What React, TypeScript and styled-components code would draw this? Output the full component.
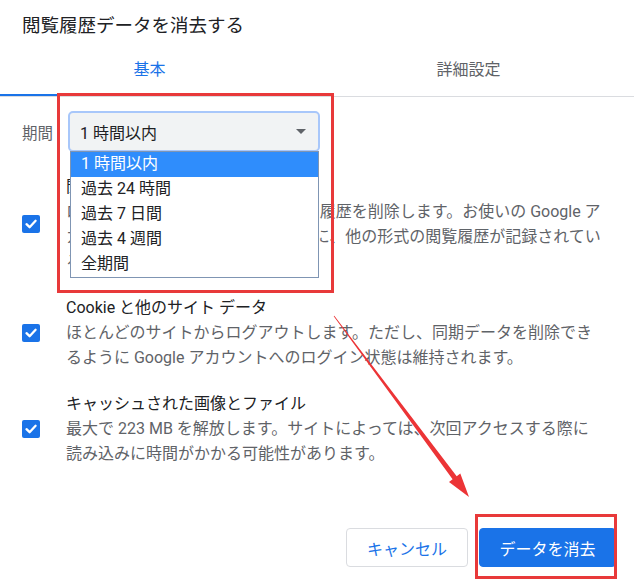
import React from "react";
import styled, { createGlobalStyle } from "styled-components";

const GlobalStyle = createGlobalStyle`
    html, body {
        margin: 0;
        padding: 0;
        background: #ffffff;
    }
    body {
        font-family: Roboto, "Noto Sans CJK JP", "Noto Sans", sans-serif;
        color: #202124;
    }
`

const Dialog = styled.div`
    position: relative;
    width: 634px;
    height: 586px;
    overflow: hidden;
    background: #ffffff;
`

const Title = styled.div`
    height: 48px;
    box-sizing: border-box;
    padding: 15px 22px 0;
    font-size: 18.5px;
    line-height: 22px;
    color: #202124;
`

const TabStrip = styled.div`
    display: flex;
    margin-left: -10px;
    width: 644px;
    border-bottom: 1px solid #dadce0;
`

const Tab = styled.div<{ $active?: boolean }>`
    width: 319px;
    height: 48px;
    box-sizing: border-box;
    padding-top: 12px;
    text-align: center;
    font-size: 16px;
    line-height: 20px;
    color: ${p => (p.$active ? "#1a73e8" : "#5f6368")};
    border-bottom: 2px solid ${p => (p.$active ? "#1a73e8" : "transparent")};
`

const PeriodRow = styled.div`
    display: flex;
    align-items: center;
    margin-top: 14px;
    padding-left: 22px;
    gap: 15px;
`

const Label = styled.span`
    font-size: 15.5px;
    color: #5f6368;
`

const SelectWrap = styled.div`
    position: relative;
    width: 252px;
`

const SelectBox = styled.div`
    height: 41px;
    box-sizing: border-box;
    display: flex;
    align-items: center;
    justify-content: space-between;
    padding: 0 12px 0 10px;
    background: #f1f3f4;
    border: 2px solid #a8c7fa;
    border-radius: 5px;
    font-size: 16px;
    color: #202124;
`

const Caret = styled.span`
    width: 0;
    height: 0;
    border-left: 5px solid transparent;
    border-right: 5px solid transparent;
    border-top: 5px solid #5f6368;
`

const OptionList = styled.div`
    position: absolute;
    top: 40px;
    left: 2px;
    width: 249px;
    box-sizing: border-box;
    background: #ffffff;
    border: 1px solid #7f95b3;
    z-index: 2;
`

const Option = styled.div<{ $selected?: boolean }>`
    height: 25px;
    line-height: 24px;
    padding-left: 10px;
    font-size: 16px;
    color: ${p => (p.$selected ? "#ffffff" : "#202124")};
    background: ${p => (p.$selected ? "#2f8dfc" : "transparent")};
`

const Sections = styled.div`
    display: flex;
    flex-direction: column;
    gap: 21px;
    padding-top: 22px;
`

const Section = styled.div`
    display: flex;
    align-items: center;
    padding-left: 22px;
    gap: 26px;
`

const Check = styled.span`
    flex: none;
    width: 18px;
    height: 18px;
    border-radius: 2px;
    background: #1a73e8;
    display: flex;
    align-items: center;
    justify-content: center;
`

const SectionText = styled.div`
    font-size: 16px;
    line-height: 25px;
    white-space: nowrap;
`

const SectionTitle = styled.div`
    color: #202124;
`

const SectionBody = styled.div`
    color: #5f6368;
`

const Footer = styled.div`
    display: flex;
    justify-content: flex-end;
    gap: 11px;
    margin-top: 62px;
    padding-right: 18px;
`

const Button = styled.button<{ $primary?: boolean }>`
    height: 39px;
    width: ${p => (p.$primary ? "137px" : "122px")};
    box-sizing: border-box;
    border-radius: 4px;
    border: 1px solid ${p => (p.$primary ? "#1a73e8" : "#dadce0")};
    background: ${p => (p.$primary ? "#1a73e8" : "#ffffff")};
    color: ${p => (p.$primary ? "#ffffff" : "#1a73e8")};
    font-family: Roboto, "Noto Sans CJK JP", sans-serif;
    font-size: 16px;
    padding: 0;
`

const RedFrame = styled.div<{ $x: number; $y: number; $w: number; $h: number }>`
    position: absolute;
    left: ${p => p.$x}px;
    top: ${p => p.$y}px;
    width: ${p => p.$w}px;
    height: ${p => p.$h}px;
    box-sizing: border-box;
    border: 3px solid #e8393a;
    pointer-events: none;
    z-index: 3;
`

const ArrowLayer = styled.svg`
    position: absolute;
    left: 0;
    top: 0;
    pointer-events: none;
    z-index: 3;
`

const CheckIcon = () => (
    <svg width="14" height="14" viewBox="0 0 14 14">
        <path d="M2.5 7.2 L5.6 10.2 L11.6 3.8" fill="none" stroke="#fff" strokeWidth="2.3" strokeLinecap="round" strokeLinejoin="round" />
    </svg>
)

const periods = ["1 時間以内", "過去 24 時間", "過去 7 日間", "過去 4 週間", "全期間"]

const items = [
    {
        title: "閲覧履歴",
        lines: [
            "ログイン中のすべてのデバイスから履歴を削除します。お使いの Google ア",
            "カウントの myactivity.google.com に、他の形式の閲覧履歴が記録されてい",
            "る場合があります。",
        ],
    },
    {
        title: "Cookie と他のサイト データ",
        lines: [
            "ほとんどのサイトからログアウトします。ただし、同期データを削除でき",
            "るように Google アカウントへのログイン状態は維持されます。",
        ],
    },
    {
        title: "キャッシュされた画像とファイル",
        lines: [
            "最大で 223 MB を解放します。サイトによっては、次回アクセスする際に",
            "読み込みに時間がかかる可能性があります。",
        ],
    },
]

const App = () => {
    return (
        <>
            <GlobalStyle />
            <Dialog>
                <Title>閲覧履歴データを消去する</Title>
                <TabStrip>
                    <Tab $active>基本</Tab>
                    <Tab>詳細設定</Tab>
                </TabStrip>

                <PeriodRow>
                    <Label>期間</Label>
                    <SelectWrap>
                        <SelectBox>
                            <span>{periods[0]}</span>
                            <Caret />
                        </SelectBox>
                        <OptionList>
                            {periods.map((p, i) => (
                                <Option key={p} $selected={i === 0}>{p}</Option>
                            ))}
                        </OptionList>
                    </SelectWrap>
                </PeriodRow>

                <Sections>
                    {items.map(item => (
                        <Section key={item.title}>
                            <Check><CheckIcon /></Check>
                            <SectionText>
                                <SectionTitle>{item.title}</SectionTitle>
                                {item.lines.map(line => (
                                    <SectionBody key={line}>{line}</SectionBody>
                                ))}
                            </SectionText>
                        </Section>
                    ))}
                </Sections>

                <Footer>
                    <Button>キャンセル</Button>
                    <Button $primary>データを消去</Button>
                </Footer>

                <RedFrame $x={57} $y={93} $w={277} $h={200} />
                <RedFrame $x={475} $y={514} $w={142} $h={65} />
                <ArrowLayer width="634" height="586" viewBox="0 0 634 586">
                    <polygon
                        points="333.7,316.2 452.6,479.3 449,482 469,497 460.3,473.6 456.7,476.3 334.3,315.8"
                        fill="#ec3436"
                    />
                </ArrowLayer>
            </Dialog>
        </>
    )
}

export default App
